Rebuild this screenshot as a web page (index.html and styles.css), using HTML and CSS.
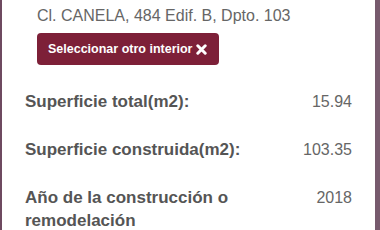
FILE: index.html
```html
<!DOCTYPE html>
<html lang="es">
<head>
<meta charset="utf-8">
<link rel="stylesheet" href="styles.css">
</head>
<body>
<div class="panel">
  <p class="address">Cl. CANELA, 484 Edif. B, Dpto. 103</p>
  <button class="btn">Seleccionar otro interior <svg class="x" width="11" height="11" viewBox="0 0 11 11"><path d="M1.8 1.8 L9.2 9.2 M9.2 1.8 L1.8 9.2" stroke="#ffffff" stroke-width="3" stroke-linecap="round"/></svg></button>
  <div class="rows">
    <div class="row"><span class="label">Superficie total(m2):</span><span class="value">15.94</span></div>
    <div class="row"><span class="label">Superficie construida(m2):</span><span class="value">103.35</span></div>
    <div class="row"><span class="label">Año de la construcción o remodelación</span><span class="value">2018</span></div>
  </div>
</div>
</body>
</html>
```
FILE: styles.css
```css
html, body {
  margin: 0;
  padding: 0;
  background: #ffffff;
}
body {
  font-family: "Liberation Sans", Arial, sans-serif;
}
.panel {
  box-sizing: border-box;
  width: 380px;
  height: 230px;
  border-left: 2px solid #6e4a60;
  border-right: 5px solid #775a6d;
  padding: 6px 23px 0 35px;
  overflow: hidden;
}
.address {
  margin: 0;
  font-size: 16px;
  line-height: 20px;
  color: #666666;
}
.btn {
  display: flex;
  align-items: center;
  gap: 4px;
  margin-top: 7px;
  height: 32px;
  width: 182px;
  padding: 0 0 0 11px;
  border: none;
  border-radius: 4px;
  background: #7d2038;
  color: #ffffff;
  font-family: "Liberation Sans", Arial, sans-serif;
  font-weight: bold;
  font-size: 12.5px;
}
.btn .x {
  display: block;
}
.rows {
  margin-left: -12px;
  margin-top: 25px;
}
.row {
  display: flex;
  justify-content: space-between;
  align-items: baseline;
  margin-bottom: 25px;
}
.label {
  font-weight: bold;
  font-size: 17px;
  line-height: 23px;
  color: #555555;
  max-width: 235px;
}
.value {
  font-size: 16px;
  line-height: 23px;
  color: #666666;
}
```
